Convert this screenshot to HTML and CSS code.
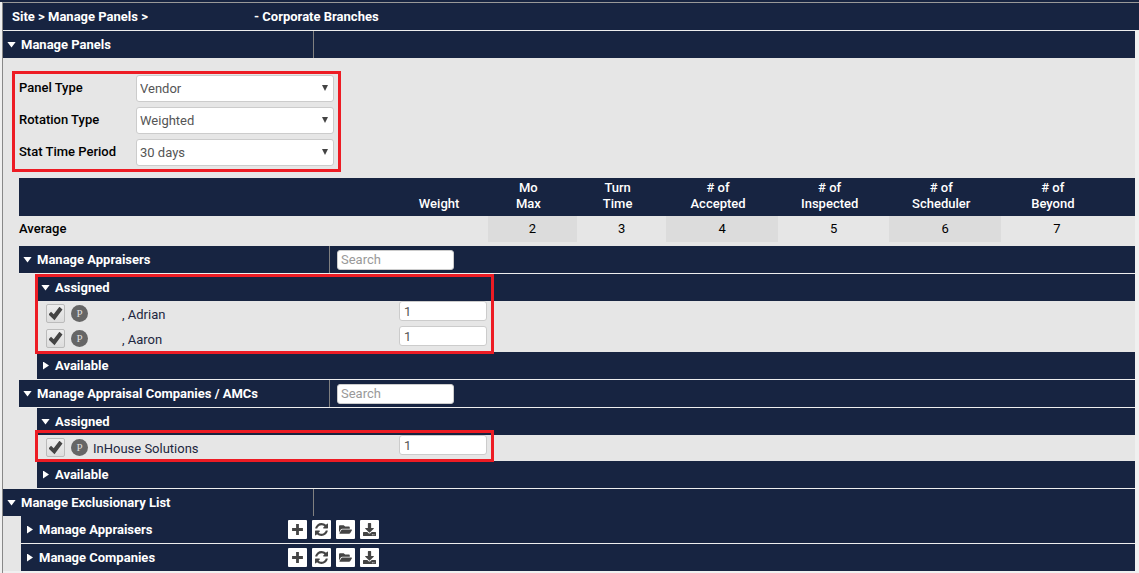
FILE: index.html
```html
<!DOCTYPE html>
<html lang="en">
<head>
<meta charset="utf-8">
<title>Manage Panels</title>
<link rel="stylesheet" href="styles.css">
</head>
<body>
<svg class="sprite" aria-hidden="true">
  <symbol id="plus" viewBox="0 0 12 12"><path d="M4.7 1h2.6v3.7H11v2.6H7.3V11H4.7V7.3H1V4.7h3.7z"/></symbol>
  <symbol id="refresh" viewBox="0 0 1536 1536"><path d="M1511 928q0 5-1 7-64 268-268 434.500T764 1536q-146 0-282.500-55T238 1324l-129 129q-19 19-45 19t-45-19-19-45V960q0-26 19-45t45-19h448q26 0 45 19t19 45-19 45l-137 137q71 66 161 102t187 36q134 0 250-65t186-179q11-17 53-117 8-23 30-23h192q13 0 22.500 9.500t9.500 22.500zm25-800v448q0 26-19 45t-45 19h-448q-26 0-45-19t-19-45 19-45l138-138Q969 256 768 256q-134 0-250 65T332 500q-11 17-53 117-8 23-30 23H50q-13 0-22.500-9.500T18 608v-7q65-268 270-434.500T768 0q146 0 284 55.500T1297 212l130-129q19-19 45-19t45 19 19 45z"/></symbol>
  <symbol id="folder" viewBox="0 0 576 512"><path d="M572.694 292.093L500.270 416.248A63.997 63.997 0 0 1 444.989 448H45.025c-18.523 0-30.064-20.093-20.731-36.093l72.424-124.155A64 64 0 0 1 152 256h399.964c18.523 0 30.064 20.093 20.730 36.093zM152 224h328v-48c0-26.510-21.490-48-48-48H272l-64-64H48C21.490 64 0 85.490 0 112v278.046l69.077-118.418C86.214 242.250 117.989 224 152 224z"/></symbol>
  <symbol id="download" viewBox="0 0 512 512"><path d="M216 0h80c13.300 0 24 10.700 24 24v168h87.700c17.800 0 26.700 21.500 14.100 34.100L269.700 378.300c-7.500 7.500-19.800 7.500-27.300 0L90.100 226.100c-12.600-12.600-3.700-34.100 14.100-34.100H192V24c0-13.300 10.700-24 24-24zm296 376v112c0 13.300-10.700 24-24 24H24c-13.300 0-24-10.700-24-24V376c0-13.300 10.700-24 24-24h146.700l49 49c20.100 20.100 52.500 20.100 72.600 0l49-49H488c13.300 0 24 10.700 24 24zM388 464a20 20 0 1 0-40 0 20 20 0 0 0 40 0zm64 0a20 20 0 1 0-40 0 20 20 0 0 0 40 0z"/></symbol>
</svg>
<div class="topline"></div>
<div class="frame">
  <header class="crumbs"><span class="trail">Site &gt; Manage Panels &gt;</span><span>- Corporate Branches</span></header>
  <main class="content">
    <div class="bar"><button class="toggle open split">Manage Panels</button></div>

    <form class="settings">
      <label for="ptype">Panel Type</label>
      <span class="pick"><select id="ptype"><option>Vendor</option></select></span>
      <label for="rtype">Rotation Type</label>
      <span class="pick"><select id="rtype"><option>Weighted</option></select></span>
      <label for="period">Stat Time Period</label>
      <span class="pick"><select id="period"><option>30 days</option></select></span>
    </form>

    <div class="panels">
      <table class="stats">
        <colgroup><col class="c-name"><col class="c-narrow"><col class="c-narrow"><col class="c-narrow"><col class="c-wide"><col class="c-wide"><col class="c-wide"><col class="c-wide"><col class="c-tail"></colgroup>
        <thead><tr><th></th><th>Weight</th><th>Mo<br>Max</th><th>Turn<br>Time</th><th># of<br>Accepted</th><th># of<br>Inspected</th><th># of<br>Scheduler</th><th># of<br>Beyond</th><th></th></tr></thead>
        <tbody><tr><th scope="row">Average</th><td></td><td class="shade">2</td><td>3</td><td class="shade">4</td><td>5</td><td class="shade">6</td><td>7</td><td></td></tr></tbody>
      </table>

      <section>
        <div class="bar ruled"><button class="toggle open split">Manage Appraisers</button><input class="search" type="text" placeholder="Search" aria-label="Search appraisers"></div>
        <div class="nested">
          <div class="marked">
            <div class="bar"><button class="toggle open">Assigned</button></div>
            <div class="rows">
              <div class="row">
                <div class="who"><input type="checkbox" id="adrian" checked><span class="badge">P</span><label class="inset" for="adrian">, Adrian</label></div>
                <input class="weight" type="text" value="1" aria-label="Weight for Adrian">
              </div>
              <div class="row">
                <div class="who"><input type="checkbox" id="aaron" checked><span class="badge">P</span><label class="inset" for="aaron">, Aaron</label></div>
                <input class="weight" type="text" value="1" aria-label="Weight for Aaron">
              </div>
            </div>
          </div>
          <div class="bar ruled"><button class="toggle">Available</button></div>
        </div>
      </section>

      <section>
        <div class="bar ruled"><button class="toggle open split">Manage Appraisal Companies / AMCs</button><input class="search" type="text" placeholder="Search" aria-label="Search companies"></div>
        <div class="nested">
          <div class="bar"><button class="toggle open">Assigned</button></div>
          <div class="marked single">
            <div class="rows">
              <div class="row">
                <div class="who"><input type="checkbox" id="inhouse" checked><span class="badge">P</span><label for="inhouse">InHouse Solutions</label></div>
                <input class="weight" type="text" value="1" aria-label="Weight for InHouse Solutions">
              </div>
            </div>
          </div>
          <div class="bar ruled"><button class="toggle">Available</button></div>
        </div>
      </section>
    </div>

    <section>
      <div class="bar"><button class="toggle open split">Manage Exclusionary List</button></div>
      <div class="nested">
        <div class="bar ruled"><button class="toggle listed">Manage Appraisers</button>
          <div class="tools"><button aria-label="Add"><svg><use href="#plus"/></svg></button><button aria-label="Refresh"><svg><use href="#refresh"/></svg></button><button aria-label="Open"><svg><use href="#folder"/></svg></button><button aria-label="Download"><svg><use href="#download"/></svg></button></div></div>
        <div class="bar"><button class="toggle listed">Manage Companies</button>
          <div class="tools"><button aria-label="Add"><svg><use href="#plus"/></svg></button><button aria-label="Refresh"><svg><use href="#refresh"/></svg></button><button aria-label="Open"><svg><use href="#folder"/></svg></button><button aria-label="Download"><svg><use href="#download"/></svg></button></div></div>
      </div>
    </section>
  </main>
</div>
</body>
</html>
```
FILE: styles.css
```css
:root {
  --navy: #172441;
  --panel: #e6e6e6;
  --red: #ed1c24;
}
*, *::before, *::after { box-sizing: border-box; }
body {
  display: flex;
  flex-direction: column;
  min-height: 100vh;
  margin: 0;
  background: #f0f0f0;
  color: #000;
  font: 13px/16px Roboto, sans-serif;
}
button, input, select { font: inherit; margin: 0; }
.sprite { display: none; }

.topline { height: 2px; background: var(--navy); }
.frame {
  flex: 1;
  margin-left: 2px;
  border-top: 1px solid #999;
  border-left: 1px solid #888;
}
.crumbs {
  display: flex;
  align-items: center;
  height: 28px;
  padding-left: 9px;
  border-bottom: 1px solid #eee;
  background: var(--navy);
  color: #fff;
  font-weight: 700;
}
.trail { width: 242px; }
.content { margin-right: 4px; background: var(--panel); }

/* Section bars */
.bar {
  display: flex;
  align-items: center;
  height: 27px;
  background: var(--navy);
}
.bar.ruled { height: 28px; border-bottom: 1px solid #eee; }
.toggle {
  display: flex;
  align-items: center;
  gap: 5px;
  height: 100%;
  padding: 0 0 0 4px;
  border: 0;
  background: none;
  color: #fff;
  font-weight: 700;
  text-align: left;
  white-space: nowrap;
}
.toggle::before {
  content: "";
  width: 9px;
  height: 8px;
  background: #fff;
  clip-path: polygon(2px 0, 8px 4px, 2px 8px);
}
.toggle.open::before { height: 6px; clip-path: polygon(0 0, 100% 0, 50% 100%); }
.split { width: 311px; border-right: 1px solid #808080; }
.listed { width: 267px; }

/* Panel settings */
.settings {
  display: grid;
  grid-template-columns: 117px 198px;
  gap: 5px 0;
  align-items: center;
  width: fit-content;
  margin: 13px 9px 6px;
  padding: 1px 4px 3px;
  border: 3px solid var(--red);
}
.settings label { padding-bottom: 2px; font-weight: 500; }
.pick { position: relative; }
.pick::after {
  content: "";
  position: absolute;
  right: 6px;
  top: 10px;
  width: 6px;
  height: 6px;
  background: #444;
  clip-path: polygon(0 0, 100% 0, 50% 100%);
}
select {
  display: block;
  width: 100%;
  height: 27px;
  padding: 0 3px;
  border: 1px solid #ccc;
  border-radius: 3px;
  background: #fff;
  color: #555;
  appearance: none;
}

/* Statistics */
.panels { padding-left: 16px; }
.stats {
  width: 100%;
  margin-bottom: 4px;
  border-collapse: collapse;
  table-layout: fixed;
}
.c-name { width: 34%; }
.c-narrow { width: 8%; }
.c-wide { width: 10%; }
.c-tail { width: 2%; }
.stats th, .stats td { padding: 0; text-align: center; }
.stats thead th {
  height: 38px;
  padding: 2px 8px 4px 0;
  background: var(--navy);
  color: #fff;
  font-weight: 500;
  vertical-align: bottom;
}
.stats tbody th { font-weight: 500; text-align: left; }
.stats td { height: 26px; }
.shade { background: #dcdcdc; }

/* Assigned rows */
.nested { padding-left: 18px; }
.marked { position: relative; }
.marked::after {
  content: "";
  position: absolute;
  top: 0;
  bottom: -2px;
  left: -2px;
  width: 459px;
  border: 3px solid var(--red);
  pointer-events: none;
}
.marked.single::after { top: -5px; bottom: -1px; }
.rows { padding-bottom: 1px; }
.row {
  display: grid;
  grid-template-columns: 362px 88px;
  align-items: start;
  height: 25px;
}
.who { display: flex; align-items: center; height: 25px; padding-left: 9px; color: #1d2740; }
.who label { padding-top: 2px; }
.badge {
  width: 17px;
  margin: 0 5px 0 6px;
  border-radius: 50%;
  background: #666;
  color: #ddd;
  font: 11px/17px "Liberation Serif", serif;
  text-align: center;
}
.inset { padding-left: 29px; }
input[type="checkbox"] {
  display: grid;
  place-items: center;
  width: 19px;
  height: 19px;
  border: 1px solid #bbb;
  border-radius: 2px;
  background: linear-gradient(#eee, #ddd);
  appearance: none;
}
input[type="checkbox"]:checked::before {
  content: "";
  width: 14px;
  height: 14px;
  background: #444;
  clip-path: polygon(0 58%, 18% 38%, 37% 56%, 78% 2%, 100% 22%, 43% 98%);
}
.search, .weight {
  width: 117px;
  height: 20px;
  padding: 0 3px;
  border: 1px solid #ccc;
  border-radius: 3px;
  background: #fff;
  color: #555;
}
.search { margin-left: 7px; }
.search::placeholder { color: #999; }
.weight { width: 88px; padding: 0 4px; }

/* Row tools */
.tools { display: flex; gap: 5px; }
.tools button {
  display: grid;
  place-items: center;
  width: 19px;
  height: 19px;
  padding: 0;
  border: 0;
  border-radius: 1px;
  background: #fff;
}
.tools svg { width: 13px; height: 13px; fill: #444; }
```
